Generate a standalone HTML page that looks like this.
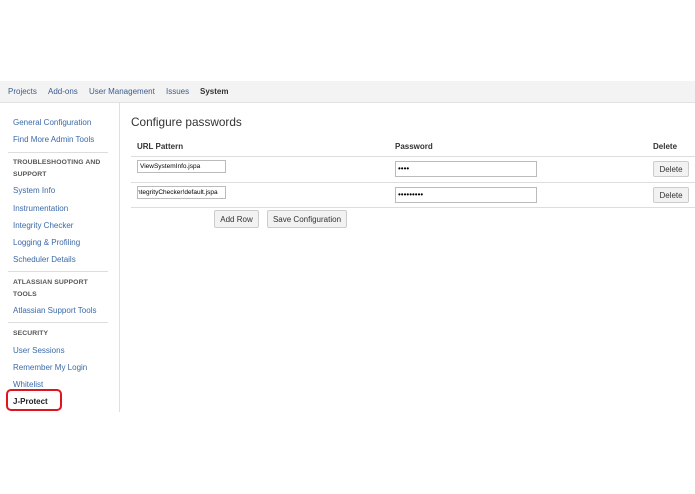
<!DOCTYPE html>
<html><head><style>
body{margin:0;width:695px;height:494px;background:#fff;font-family:"Liberation Sans",Arial,sans-serif;position:relative;overflow:hidden}
.a{position:absolute;white-space:nowrap}
.nav{position:absolute;left:0;top:81px;width:695px;height:21px;background:#f3f3f3;border-bottom:1px solid #e2e2e2}
.nav span{position:absolute;top:6px;font-size:8px;color:#3b5d8f}
.l{font-size:8px;color:#3b6aa8;margin-top:1px}
.h{font-size:6.8px;color:#555;font-weight:bold;letter-spacing:.1px;margin-top:1px}
.sep{position:absolute;left:8px;width:100px;height:1px;background:#ddd}
.line{position:absolute;left:131px;width:564px;height:1px;background:#ddd}
.in{position:absolute;border:1px solid #bbb;background:#fff;font-size:6.5px;line-height:11px;padding-left:2px;box-sizing:border-box;overflow:hidden}
.btn{position:absolute;border:1px solid #ccc;border-radius:2px;background:#f2f2f2;font-size:8px;color:#333;text-align:center;box-sizing:border-box}
</style></head><body>
<div class="nav">
<span style="left:8px">Projects</span><span style="left:48px">Add-ons</span><span style="left:89px">User Management</span><span style="left:166px">Issues</span><span style="left:200px;color:#333;font-weight:bold">System</span>
</div>
<div style="position:absolute;left:119px;top:102px;width:1px;height:310px;background:#e0e0e0"></div>
<div class="a l" style="left:13px;top:117px">General Configuration</div>
<div class="a l" style="left:13px;top:134px">Find More Admin Tools</div>
<div class="sep" style="top:152px"></div>
<div class="a h" style="left:13px;top:158px">TROUBLESHOOTING AND</div>
<div class="a h" style="left:13px;top:170px">SUPPORT</div>
<div class="a l" style="left:13px;top:185px">System Info</div>
<div class="a l" style="left:13px;top:203px">Instrumentation</div>
<div class="a l" style="left:13px;top:220px">Integrity Checker</div>
<div class="a l" style="left:13px;top:237px">Logging &amp; Profiling</div>
<div class="a l" style="left:13px;top:254px">Scheduler Details</div>
<div class="sep" style="top:271px"></div>
<div class="a h" style="left:13px;top:278px">ATLASSIAN SUPPORT</div>
<div class="a h" style="left:13px;top:290px">TOOLS</div>
<div class="a l" style="left:13px;top:305px">Atlassian Support Tools</div>
<div class="sep" style="top:322px"></div>
<div class="a h" style="left:13px;top:329px">SECURITY</div>
<div class="a l" style="left:13px;top:345px">User Sessions</div>
<div class="a l" style="left:13px;top:362px">Remember My Login</div>
<div class="a l" style="left:13px;top:379px">Whitelist</div>
<div class="a" style="left:13px;top:397px;font-size:8px;font-weight:bold;color:#222">J-Protect</div>
<div class="a" style="left:6px;top:389px;width:52px;height:18px;border:2px solid #e0141e;border-radius:5px"></div>

<div class="a" style="left:131px;top:115px;font-size:11.8px;color:#333">Configure passwords</div>
<div class="a" style="left:137px;top:142px;font-size:8px;font-weight:bold;color:#333">URL Pattern</div>
<div class="a" style="left:395px;top:142px;font-size:8px;font-weight:bold;color:#333">Password</div>
<div class="a" style="left:653px;top:142px;font-size:8px;font-weight:bold;color:#333">Delete</div>
<div class="line" style="top:156px"></div>
<div class="in" style="left:137px;top:160px;width:89px;height:13px">ViewSystemInfo.jspa</div>
<div class="in" style="left:395px;top:161px;width:142px;height:16px;line-height:14px;font-size:8px">••••</div>
<div class="btn" style="left:653px;top:161px;width:36px;height:16px;line-height:15px">Delete</div>
<div class="line" style="top:182px"></div>
<div class="in" style="left:137px;top:186px;width:89px;height:13px;text-indent:-3px">ntegrityChecker!default.jspa</div>
<div class="in" style="left:395px;top:187px;width:142px;height:16px;line-height:14px;font-size:8px">•••••••••</div>
<div class="btn" style="left:653px;top:187px;width:36px;height:16px;line-height:15px">Delete</div>
<div class="line" style="top:207px"></div>
<div class="btn" style="left:214px;top:210px;width:45px;height:18px;line-height:17px">Add Row</div>
<div class="btn" style="left:267px;top:210px;width:80px;height:18px;line-height:17px">Save Configuration</div>
</body></html>
